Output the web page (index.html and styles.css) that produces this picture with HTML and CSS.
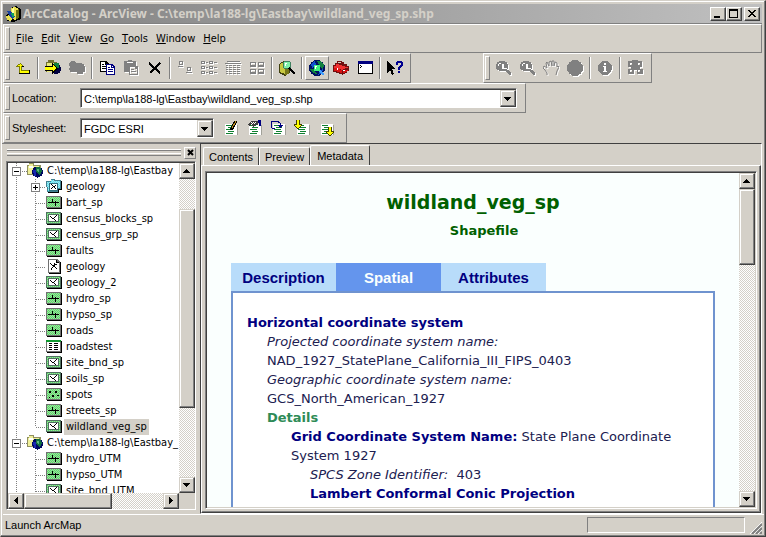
FILE: index.html
```html
<!DOCTYPE html>
<html lang="en">
<head>
<meta charset="utf-8">
<title>ArcCatalog - ArcView - C:\temp\la188-lg\Eastbay\wildland_veg_sp.shp</title>
<link rel="stylesheet" href="styles.css">
</head>
<body>
<svg class="sprites" aria-hidden="true">
  <defs>
    <pattern id="green" width="2" height="2" patternUnits="userSpaceOnUse"><path fill="#58e068" d="M0 0h2v2H0z"/><path fill="#a0d8a0" d="M0 0h1v1H0zM1 1h1v1H1z"/></pattern>
    <pattern id="cyan" width="2" height="2" patternUnits="userSpaceOnUse"><path fill="#50e8f8" d="M0 0h2v2H0z"/><path fill="#b0e0e8" d="M0 0h1v1H0zM1 1h1v1H1z"/></pattern>
  </defs>
  <symbol id="line" viewBox="0 0 16 16"><path fill="#000" d="M1 2h15v12H1z"/><path fill="#707070" d="M0 1h15v12H0z"/><path fill="url(#green)" d="M1 2h13v10H1z"/><path fill="#000" d="M2 7h11v1H2zM6 4h1v4H6zM9 6h1v5H9z"/></symbol>
  <symbol id="poly" viewBox="0 0 16 16"><path fill="#000" d="M1 2h15v12H1z"/><path fill="#507060" d="M0 1h15v12H0z"/><path fill="url(#green)" d="M1 2h13v10H1z"/><path fill="#507060" d="M2 3h11v8H2z"/><path fill="#fff" d="M3 4h9v6H3z"/><path fill="#000" d="M4 5h1v1H4zM5 6h1v1H5zM6 7h2v1H6zM8 6h1v1H8zM9 5h1v1H9zM10 4h1v1h-1zM8 8h1v1H8zM9 9h1v1H9z"/></symbol>
  <symbol id="points" viewBox="0 0 16 16"><path fill="#000" d="M1 2h15v12H1z"/><path fill="#707070" d="M0 1h15v12H0z"/><path fill="url(#green)" d="M1 2h13v10H1z"/><path fill="#000" d="M3 4h2v2H3zM9 4h2v2H9zM6 8h2v2H6zM11 8h2v1h-2zM3 10h1v1H3z"/></symbol>
  <symbol id="table" viewBox="0 0 16 16"><path fill="#000" d="M1 2h15v12H1z"/><path fill="#707070" d="M0 1h15v12H0z"/><path fill="#fff" d="M1 3h13v9H1z"/><path fill="#109830" d="M0 1h15v2H0z"/><path fill="#000" d="M3 4h3v1H3zM8 4h4v1H8zM3 6h3v1H3zM8 6h4v1H8zM3 8h3v1H3zM8 8h4v1H8zM3 10h3v1H3zM8 10h4v1H8z"/></symbol>
  <symbol id="coverage" viewBox="0 0 16 16"><path fill="#000" d="M3 1h9l3 3v11H3z"/><path fill="#707070" d="M2 0h9l3 3v11H2z"/><path fill="#fff" d="M3 1h7v3h3v9H3z"/><path fill="#000" d="M10 1h1v2h2v1h-3zM4 4h1v1H4zM5 5h1v1H5zM6 6h3v1H6zM9 5h2v1H9zM7 7h1v1H7zM6 8h1v1H6zM5 9h1v2H5zM8 7h1v1H8zM9 8h1v1H9zM10 9h1v1h-1zM8 4h1v2H8z"/></symbol>
  <symbol id="dataset" viewBox="0 0 16 16"><path fill="#000" d="M2 4h13V2h1v9h-3v3H2z"/><path fill="#408090" d="M0 2h5V0h4v1h6v9h-3v3H1z"/><path fill="url(#cyan)" d="M1 3h4V1h3v1h6v7h-2v3H2z"/><path fill="#307080" d="M3 4h9v8H3z"/><path fill="#fff" d="M4 5h7v6H4z"/><path fill="#000" d="M5 5h1v1H5zM6 6h1v1H6zM7 7h2v1H7zM9 6h1v1H9zM6 8h1v1H6zM5 9h1v1H5zM8 8h1v1H8zM9 9h1v1H9z"/></symbol>
  <symbol id="folder" viewBox="0 0 16 16"><path fill="#909060" d="M0 2h2V0h5v2h7v10H0z"/><path fill="#f0f098" d="M1 3h1V1h4v2h6v8H1z"/><path fill="#fff" d="M2 3h4v2H2z"/><circle cx="10.500" cy="9" r="5.500" fill="#000860"/><path fill="#1828b0" d="M6 7h3v6H7z"/><path fill="#107040" d="M9 4h4l2 4-2 4-2-1-2-3z"/><path fill="#60b880" d="M10 6h2v3h-1z"/></symbol>
  <symbol id="sheet" viewBox="0 0 16 16"><path fill="#a0a098" d="M4 15h12V5h-1v9H4z"/><path fill="#fff" d="M3 4h12v11H3z"/><path fill="#108030" d="M4 5h6v1H4zM6 7h6v1H6zM4 9h7v1H4zM6 11h6v1H6zM4 13h7v1H4z"/></symbol>
  <symbol id="glass" viewBox="0 0 16 16"><path d="M4 1h6v1h2v2h1v5h-1v1h2v1h1v1h1v3h-2v-1h-1v-1h-1v-1h-1v-1H4v-1H2V9H1V4h1V2h2z"/><path fill="#fff" d="M4 3h2v1H4zM3 4h1v2H3zM8 4h1v4h3v1H7V4z"/></symbol>
  <symbol id="up" viewBox="0 0 8 4"><path d="M3 0h1v1h1v1h1v1h1v1H0V3h1V2h1V1h1z"/></symbol>
  <symbol id="down" viewBox="0 0 8 4"><path d="M0 0h7v1H6v1H5v1H4v1H3V3H2V2H1V1H0z"/></symbol>
</svg>

<div class="window">
  <header class="titlebar">
    <svg class="icon" viewBox="0 0 16 16"><path fill="#000" d="M1 9l5-2V2l5-2 5 3v10l-7 3-7-1z"/><path fill="#e8e050" d="M6 2l4-1 4 2v9l-4 2-4-3zM1 10l3-1 4 3-2 3-4-1z"/><path fill="#ffffa0" d="M7 3l2-1v8L7 9z"/><path fill="#707010" d="M11 4l3-1v9l-3 1z"/><path fill="#1840a0" d="M2 5h3l3 2 2 4-3 2-3-4z"/><path fill="#10a060" d="M6 7h3v4H7z"/></svg>
    <h1>ArcCatalog - ArcView - C:\temp\la188-lg\Eastbay\wildland_veg_sp.shp</h1>
    <button class="caption" aria-label="Minimize"><svg viewBox="0 0 10 9"><path d="M1 7h6v2H1z"/></svg></button>
    <button class="caption" aria-label="Maximize"><svg viewBox="0 0 10 9"><path fill-rule="evenodd" d="M0 0h9v9H0zM1 2v6h7V2z"/></svg></button>
    <button class="caption close" aria-label="Close"><svg viewBox="0 0 10 9"><path d="M1 1h2v1h1v1h2V2h1V1h2v1H8v1H7v1H6v1h1v1h1v1h1v1H7V7H6V6H4v1H3v1H1V7h1V6h1V5h1V4H3V3H2V2H1z"/></svg></button>
  </header>

  <nav class="bar menubar" aria-label="Menu">
    <button><u>F</u>ile</button><button><u>E</u>dit</button><button><u>V</u>iew</button><button><u>G</u>o</button><button><u>T</u>ools</button><button><u>W</u>indow</button><button><u>H</u>elp</button>
  </nav>

  <div class="row">
    <div class="bar toolbar">
      <button aria-label="Up one level"><svg class="icon" viewBox="0 0 16 16"><path fill="#808000" d="M5 3h1v1h1v1h1v1h1v1H7v3h8v4H4V7H1V6h1V5h1V4h2z"/><path fill="#ffff00" d="M5 4h1v1h1v1H6v5h8v2H5V6H3V5h2z"/><path fill="#000" d="M4 13h11v1H4zM14 10h1v4h-1zM7 6h2v1H7z"/></svg></button>
      <i class="sep"></i>
      <button aria-label="Connect to folder"><svg class="icon" viewBox="0 0 16 16"><path fill="#707030" d="M1 2h2V0h6v2h3v10H1z"/><path fill="#e8e878" d="M2 3h9v9H2z"/><circle cx="11" cy="9" r="5" fill="#000040"/><path fill="#108040" d="M9 3h5v5l-3 2z"/><path fill="#000" d="M0 6h7V3l6 5-6 6v-3H0z"/><path fill="#ffff00" d="M0 7h8V5l3 3-3 3v-1H0z"/></svg></button>
      <button disabled aria-label="Disconnect folder"><svg class="icon" viewBox="0 0 16 16"><path d="M0 3h1V2h1V1h4v1h1v1h6v1h2v2h1v6h-2v2H8v-2H1v-2H0V8h1V6H0z"/></svg></button>
      <i class="sep"></i>
      <button aria-label="Copy"><svg class="icon" viewBox="0 0 16 16"><path fill="#000" d="M1 1h6l3 3v8H1z"/><path fill="#fff" d="M2 2h4v3h3v6H2z"/><path fill="#000" d="M3 4h2v1H3zM3 6h4v1H3zM3 8h4v1H3z"/><path fill="#000080" d="M7 4h6l3 3v8H7z"/><path fill="#fff" d="M8 5h4v3h3v6H8zM13 6l1 1h-1z"/><path fill="#000080" d="M9 7h2v1H9zM9 9h5v1H9zM9 11h5v1H9z"/></svg></button>
      <button disabled aria-label="Paste"><svg class="icon" viewBox="0 0 16 16"><path fill-rule="evenodd" d="M1 1h4V0h4v1h4v5h2v9H6v-3H1zM4 2v1h6V2zM7 7v7h7V9h-2V7zM8 9h3v1H8zM8 11h5v1H8z"/></svg></button>
      <button aria-label="Delete"><svg class="icon" viewBox="0 0 16 16"><path fill="none" stroke="#000" stroke-width="2" d="M2 3l11 10M13 3L3 13"/></svg></button>
      <i class="sep"></i>
      <button disabled aria-label="Large icons"><svg class="icon" viewBox="0 0 16 16"><path fill-rule="evenodd" d="M2 1h4v4H2zM3 2v2h2V2zM1 6h5v1H1zM10 7h4v4h-4zM11 8v2h2V8zM9 12h6v1H9z"/></svg></button>
      <button disabled aria-label="List"><svg class="icon" viewBox="0 0 16 16"><path fill-rule="evenodd" d="M0 1h4v3H0zM1 2v1h2V2zM5 2h2v1H5zM8 1h4v3H8zM9 2v1h2V2zM13 2h3v1h-3zM0 6h4v3H0zM1 7v1h2V7zM5 7h2v1H5zM8 6h4v3H8zM9 7v1h2V7zM13 7h3v1h-3zM0 11h4v3H0zM1 12v1h2v-1zM5 12h2v1H5zM8 11h4v3H8zM9 12v1h2v-1zM13 12h3v1h-3z"/></svg></button>
      <button disabled aria-label="Details"><svg class="icon" viewBox="0 0 16 16"><path d="M2 1h13v1H2zM0 3h16v1H0zM1 5h2v1H1zM4 5h3v1H4zM8 5h3v1H8zM12 5h3v1h-3zM1 7h2v1H1zM4 7h3v1H4zM8 7h3v1H8zM12 7h3v1h-3zM1 9h2v1H1zM4 9h3v1H4zM8 9h3v1H8zM12 9h3v1h-3zM1 11h2v1H1zM4 11h3v1H4zM8 11h3v1H8zM12 11h3v1h-3zM1 13h2v1H1zM4 13h3v1H4zM8 13h3v1H8zM12 13h3v1h-3z"/></svg></button>
      <button disabled aria-label="Thumbnails"><svg class="icon" viewBox="0 0 16 16"><path fill-rule="evenodd" d="M1 2h6v5H1zM2 3v2h4V3zM9 2h6v5H9zM10 3v2h4V3zM1 9h6v5H1zM2 10v2h4v-2zM9 9h6v5H9zM10 10v2h4v-2z"/></svg></button>
      <i class="sep"></i>
      <button aria-label="Search"><svg class="icon" viewBox="0 0 16 16"><path fill="#404010" d="M0 4l5-3 6 1v11l-5 3-6-3z"/><path fill="#c8c840" d="M1 4l5-2 4 2v8l-4 2-5-2z"/><path fill="#787818" d="M6 7h4v7l-4 1z"/><circle cx="8" cy="5" r="4.500" fill="#408060"/><circle cx="8" cy="5" r="3.500" fill="#80f0a8"/><path fill="#fff" d="M6 3h2v1H7v2H6z"/><path fill="none" stroke="#000" stroke-width="2" d="M10 8l6 6"/></svg></button>
      <i class="sep"></i>
      <button class="raised" aria-label="Launch ArcMap"><svg class="icon" viewBox="0 0 16 16"><circle cx="8" cy="8" r="8" fill="#001060"/><path fill="#1050d0" d="M2 4l4-3 1 3-4 4zM11 11l3-2-1 4-4 2z"/><path fill="#108040" d="M8 1h4l3 4-1 4-3-2zM1 9h4l3 5-4-1z"/><circle cx="8" cy="8" r="3.500" fill="#40f080"/><path fill="#fff" d="M6 6h2v1H7v2H6z"/><path fill="none" stroke="#40a0ff" stroke-width="2" d="M11 11l4 4"/></svg></button>
      <button aria-label="ArcToolbox"><svg class="icon" viewBox="0 0 16 16"><path fill="#701010" d="M0 5h2V3h2V1h5v1h2v2h3v2h2v5h-2v2h-2v1h-2v1H9v-1H6v-1H3v-1H0z"/><path fill="#f03030" d="M1 6h2V4h3v1h3v1h3v1h3v1h-3v1h-2v1H8V9H5V8H1z"/><path fill="#d81010" d="M1 8h3v1h3v1h2v3H7v-1H4v-1H1zM10 11h2v-1h3v1h-1v1h-2v1h-2z"/><path fill="#fff" d="M4 8h1v2H4zM10 10h2v1h-2z"/><path fill="#d4d0c8" d="M5 2h3v1H5z"/></svg></button>
      <button aria-label="Command line"><svg class="icon" viewBox="0 0 16 16"><path fill="#000" d="M1 2h15v12H1z"/><path fill="#000080" d="M1 1h15v3H1z"/><path fill="#fff" d="M2 4h13v9H2z"/><path fill="#000" d="M3 5h1v1H3zM4 6h1v1H4zM3 7h1v1H3z"/></svg></button>
      <i class="sep"></i>
      <button aria-label="What's this?"><svg class="icon wide" viewBox="0 0 18 16"><path fill="#000" d="M1 1l8 8H6l2 5-2 1-2-5-3 3z"/><path fill="#000090" d="M10 2h1V1h5v1h1v4h-1v1h-1v1h-1v2h-2V7h1V6h1V5h1V3h-3v2h-2zM12 11h2v2h-2z"/></svg></button>
    </div>
    <div class="bar toolbar geography">
      <button disabled aria-label="Zoom in"><svg class="icon"><use href="#glass"/></svg></button>
      <button disabled aria-label="Zoom out"><svg class="icon"><use href="#glass"/></svg></button>
      <button disabled aria-label="Pan"><svg class="icon smooth" viewBox="0 0 16 16"><path fill="none" stroke="#808080" d="M4 15v-2l-2-3-2-2 1-2 3 2-1-5 1-1 2 4V2l2-1 1 5V1h2v5l1-4 2 1v4l1-1 1 1-2 4-1 4"/></svg></button>
      <button disabled aria-label="Full extent"><svg class="icon" viewBox="0 0 16 16"><circle cx="8" cy="8" r="8"/></svg></button>
      <i class="sep"></i>
      <button disabled aria-label="Identify"><svg class="icon" viewBox="0 0 16 16"><circle cx="8" cy="8" r="7"/><path fill="#fff" d="M7 3h2v2H7zM6 6h3v5h1v1H6v-1h1V7H6z"/></svg></button>
      <i class="sep"></i>
      <button disabled aria-label="Create thumbnail"><svg class="icon" viewBox="0 0 16 16"><path fill-rule="evenodd" d="M1 1h4V0h6v1h4v6h-2v2h3v5h-6v-4H7v4H1V9h3V7H1zM3 3v2h2V3zM11 3v2h2V3zM3 10v2h2v-2zM11 10v2h2v-2z"/></svg></button>
    </div>
  </div>

  <div class="row">
    <div class="bar location">
      <label for="location">Location:</label>
      <span class="combo"><input id="location" type="text" value="C:\temp\la188-lg\Eastbay\wildland_veg_sp.shp"><button aria-label="Show locations"><svg class="arrow"><use href="#down"/></svg></button></span>
    </div>
  </div>

  <div class="row">
    <div class="bar stylesheet">
      <label for="stylesheet">Stylesheet:</label>
      <span class="combo"><select id="stylesheet"><option>FGDC ESRI</option></select><span class="drop"><svg class="arrow"><use href="#down"/></svg></span></span>
      <button aria-label="Edit metadata"><svg class="icon" viewBox="0 0 16 16"><use href="#sheet"/><path fill="none" stroke="#000" stroke-width="3" d="M9 10l5-9"/><path fill="none" stroke="#c09020" d="M10 8l4-7"/></svg></button>
      <button aria-label="Metadata properties"><svg class="icon" viewBox="0 0 16 16"><use href="#sheet"/><path fill="#404040" d="M2 4l3-3h7v4H9L7 7 6 4 3 6z"/><path fill="#fff" d="M5 2h1v1H5zM7 2h1v1H7zM9 2h1v1H9zM6 3h1v1H6zM8 3h1v1H8z"/><path fill="#000080" d="M12 0h3v6h-2V3h-1z"/></svg></button>
      <button aria-label="Create metadata"><svg class="icon" viewBox="0 0 16 16"><use href="#sheet"/><path fill="#000080" d="M1 1h8v1h1v1h1v2h2v1h-1v1h-1v1h-1V7H9V6H8V5h2V3H8V2H2v6h3v1H2V8H1z"/></svg></button>
      <button aria-label="Import metadata"><svg class="icon" viewBox="0 0 16 16"><use href="#sheet"/><path fill="#404000" d="M2 0h4v4h2v2H7v1H6v1H5v1H3V8H2V7H1V6H0V4h2z"/><path fill="#ffff00" d="M3 0h2v5h2v1H6v1H5v1H3V7H2V6H1V5h2z"/></svg></button>
      <button aria-label="Export metadata"><svg class="icon" viewBox="0 0 16 16"><use href="#sheet"/><path fill="#404000" d="M10 7h4v4h2v2h-1v1h-1v1h-1v1h-2v-1h-1v-1H9v-1H8v-2h2z"/><path fill="#ffff00" d="M11 7h2v5h2v1h-1v1h-1v1h-2v-1h-1v-1H9v-1h2z"/></svg></button>
    </div>
  </div>

  <main class="main">
    <aside class="catalog">
      <div class="dock"><span class="grip"></span><button aria-label="Close catalog tree"><svg viewBox="0 0 7 7"><path fill="none" stroke="#000" stroke-width="2" d="M1 1l5 5M6 1L1 6"/></svg></button></div>
      <div class="treebox">
        <ul class="tree">
          <li>
            <div class="node root"><span class="stem"><button aria-label="Collapse"><svg viewBox="0 0 7 7"><path d="M1 3h5v1H1z"/></svg></button></span><svg class="icon"><use href="#folder"/></svg><span class="name">C:\temp\la188-lg\Eastbay</span></div>
            <ul>
              <li class="node"><span class="stem"><button aria-label="Expand"><svg viewBox="0 0 7 7"><path d="M1 3h5v1H1zM3 1h1v5H3z"/></svg></button></span><svg class="icon"><use href="#dataset"/></svg><span class="name">geology</span></li>
              <li class="node"><span class="stem"></span><svg class="icon"><use href="#line"/></svg><span class="name">bart_sp</span></li>
              <li class="node"><span class="stem"></span><svg class="icon"><use href="#poly"/></svg><span class="name">census_blocks_sp</span></li>
              <li class="node"><span class="stem"></span><svg class="icon"><use href="#poly"/></svg><span class="name">census_grp_sp</span></li>
              <li class="node"><span class="stem"></span><svg class="icon"><use href="#line"/></svg><span class="name">faults</span></li>
              <li class="node"><span class="stem"></span><svg class="icon"><use href="#coverage"/></svg><span class="name">geology</span></li>
              <li class="node"><span class="stem"></span><svg class="icon"><use href="#poly"/></svg><span class="name">geology_2</span></li>
              <li class="node"><span class="stem"></span><svg class="icon"><use href="#line"/></svg><span class="name">hydro_sp</span></li>
              <li class="node"><span class="stem"></span><svg class="icon"><use href="#line"/></svg><span class="name">hypso_sp</span></li>
              <li class="node"><span class="stem"></span><svg class="icon"><use href="#line"/></svg><span class="name">roads</span></li>
              <li class="node"><span class="stem"></span><svg class="icon"><use href="#table"/></svg><span class="name">roadstest</span></li>
              <li class="node"><span class="stem"></span><svg class="icon"><use href="#poly"/></svg><span class="name">site_bnd_sp</span></li>
              <li class="node"><span class="stem"></span><svg class="icon"><use href="#poly"/></svg><span class="name">soils_sp</span></li>
              <li class="node"><span class="stem"></span><svg class="icon"><use href="#points"/></svg><span class="name">spots</span></li>
              <li class="node"><span class="stem"></span><svg class="icon"><use href="#line"/></svg><span class="name">streets_sp</span></li>
              <li class="node last"><span class="stem"></span><svg class="icon"><use href="#poly"/></svg><span class="name selected">wildland_veg_sp</span></li>
            </ul>
          </li>
          <li>
            <div class="node root"><span class="stem"><button aria-label="Collapse"><svg viewBox="0 0 7 7"><path d="M1 3h5v1H1z"/></svg></button></span><svg class="icon"><use href="#folder"/></svg><span class="name">C:\temp\la188-lg\Eastbay_</span></div>
            <ul>
              <li class="node"><span class="stem"></span><svg class="icon"><use href="#line"/></svg><span class="name">hydro_UTM</span></li>
              <li class="node"><span class="stem"></span><svg class="icon"><use href="#line"/></svg><span class="name">hypso_UTM</span></li>
              <li class="node"><span class="stem"></span><svg class="icon"><use href="#poly"/></svg><span class="name">site_bnd_UTM</span></li>
            </ul>
          </li>
        </ul>
        <div class="scroll vertical tree-v"><button aria-label="Scroll up"><svg class="arrow"><use href="#up"/></svg></button><div class="track"><div class="thumb"></div></div><button aria-label="Scroll down"><svg class="arrow"><use href="#down"/></svg></button></div>
        <div class="scroll horizontal"><button aria-label="Scroll left"><svg class="arrow side" viewBox="0 0 4 8"><path d="M4 0v7H3V6H2V5H1V4H0V3h1V2h1V1h1V0z"/></svg></button><div class="track"><div class="thumb"></div></div><button aria-label="Scroll right"><svg class="arrow side" viewBox="0 0 4 8"><path d="M0 0v7h1V6h1V5h1V4h1V3H3V2H2V1H1V0z"/></svg></button></div>
      </div>
    </aside>

    <section class="view">
      <div class="tabs" role="tablist">
        <button role="tab">Contents</button><button role="tab">Preview</button><button role="tab" class="active" aria-selected="true">Metadata</button>
      </div>
      <div class="page">
        <div class="viewer">
          <article class="doc">
            <h2>wildland_veg_sp</h2>
            <h3>Shapefile</h3>
            <div class="doc-tabs"><button>Description</button><button class="current">Spatial</button><button>Attributes</button></div>
            <div class="sheet">
              <h4>Horizontal coordinate system</h4>
              <div class="level1">
                <p><em>Projected coordinate system name:</em></p>
                <p>NAD_1927_StatePlane_California_III_FIPS_0403</p>
                <p><em>Geographic coordinate system name:</em></p>
                <p>GCS_North_American_1927</p>
                <h5>Details</h5>
                <div class="level2">
                  <p><b>Grid Coordinate System Name:</b> State Plane Coordinate System 1927</p>
                  <div class="level3">
                    <p><em>SPCS Zone Identifier:</em>&nbsp; 403</p>
                    <p><b>Lambert Conformal Conic Projection</b></p>
                  </div>
                </div>
              </div>
            </div>
          </article>
          <div class="scroll vertical doc-v"><button aria-label="Scroll up"><svg class="arrow"><use href="#up"/></svg></button><div class="track"><div class="thumb"></div></div><button aria-label="Scroll down"><svg class="arrow"><use href="#down"/></svg></button></div>
        </div>
      </div>
    </section>
  </main>

  <footer class="status"><span class="message">Launch ArcMap</span><span class="progress"></span><svg class="resize" viewBox="0 0 12 12"><path fill="none" stroke="#fff" d="M0 12L12 0M4 12l8-8M8 12l4-4"/><path fill="none" stroke="#808080" stroke-width="2" d="M2 12L12 2M6 12l6-6M10 12l2-2"/></svg></footer>
</div>
</body>
</html>
```
FILE: styles.css
```css
:root {
  --face: #d4d0c8;
  --shade: #808080;
  --dark: #404040;
  --ui: "DejaVu Sans Condensed", "DejaVu Sans", sans-serif;
  --small: "Liberation Sans", sans-serif;
}

* { box-sizing: border-box; }

body {
  margin: 0;
  font: 11px/16px var(--ui);
  color: #000;
  background: var(--face);
}

h1, h2, h3, h4, h5, p, ul { margin: 0; padding: 0; }
ul { list-style: none; }
svg { display: block; flex: none; shape-rendering: crispEdges; }
.sprites { position: absolute; width: 0; height: 0; }
.icon { width: 16px; height: 16px; }
.icon.wide { width: 18px; }
.smooth { shape-rendering: auto; }
.arrow { width: 8px; height: 4px; }
.arrow.side { width: 4px; height: 8px; }

button {
  display: flex;
  align-items: center;
  justify-content: center;
  margin: 0;
  padding: 0;
  border: 0;
  background: var(--face);
  color: #000;
  font: inherit;
}

.window {
  display: flex;
  flex-direction: column;
  height: 100vh;
  padding: 2px 1px 0 1px;
  border: 1px solid;
  border-color: var(--face) var(--dark) var(--dark) var(--face);
  box-shadow: inset -1px -1px var(--shade), inset 1px 1px #fff;
}

.titlebar {
  display: flex;
  align-items: center;
  height: 20px;
  margin: 1px 2px 0 1px;
  padding: 0 2px;
  background: linear-gradient(to right, #808080, #c0c0c0);
  border-bottom: 1px solid var(--shade);
}
.titlebar h1 {
  flex: 1;
  padding-left: 2px;
  color: var(--face);
  font: bold 12px/16px "Noto Sans", sans-serif;
  white-space: nowrap;
}
.caption {
  width: 16px;
  height: 14px;
  border: 1px solid;
  border-color: #fff var(--dark) var(--dark) #fff;
  box-shadow: inset -1px -1px var(--shade);
}
.caption svg { width: 10px; height: 9px; }
.close { margin-left: 2px; }

.bar {
  display: flex;
  align-items: center;
  border: 1px solid;
  border-color: #fff var(--shade) var(--shade) #fff;
}
.bar::before {
  content: "";
  align-self: stretch;
  width: 3px;
  margin: 2px 0 2px 1px;
  border: 1px solid;
  border-color: #fff var(--shade) var(--shade) #fff;
}
.menubar {
  height: 29px;
  margin: 0 2px 0 1px;
}
.menubar::before { margin-right: 6px; }
.menubar button { margin-right: 8px; }
.row { display: flex; height: 30px; margin: 0 2px 0 1px; }
.row .bar { height: 30px; }

.toolbar { padding-right: 3px; }
.toolbar::before { margin-right: 1px; }
.geography { margin-left: 72px; padding-right: 4px; }
.bar.toolbar button, .stylesheet > button { width: 24px; height: 24px; }
.bar button:disabled svg { fill: var(--shade); filter: drop-shadow(1px 1px 0 #fff); }
.raised {
  border: 1px solid;
  border-color: #fff var(--shade) var(--shade) #fff;
}
.sep {
  width: 2px;
  height: 22px;
  margin: 0 2px;
  border-left: 1px solid var(--shade);
  border-right: 1px solid #fff;
}

.location, .stylesheet { font-family: var(--small); }
.location label, .stylesheet label { width: 70px; padding-left: 2px; }
.location { width: 523px; padding-right: 8px; }
.stylesheet { width: 344px; }
.combo {
  display: flex;
  flex: 1;
  height: 20px;
  border: 1px solid;
  border-color: var(--shade) #fff #fff var(--shade);
  box-shadow: inset 1px 1px var(--dark);
  padding: 1px 0 0 1px;
  background: #fff;
}
.combo input, .combo select {
  flex: 1;
  min-width: 0;
  padding: 0 2px;
  border: 0;
  background: transparent;
  color: #000;
  font: 11px/16px var(--small);
  appearance: none;
}
.stylesheet .combo { position: relative; flex: none; width: 134px; margin-right: 4px; }
.combo button, .drop, .scroll button, .thumb {
  border: 1px solid;
  border-color: var(--face) var(--dark) var(--dark) var(--face);
  box-shadow: inset -1px -1px var(--shade), inset 1px 1px #fff;
  background: var(--face);
}
.combo button, .drop { width: 16px; }
.drop {
  position: absolute;
  inset: 1px 0 0 auto;
  display: flex;
  align-items: center;
  justify-content: center;
  pointer-events: none;
}

.main {
  display: grid;
  flex: 1;
  grid-template-columns: 198px 1fr;
  min-height: 0;
  margin-right: 2px;
}
.catalog {
  display: flex;
  flex-direction: column;
  min-height: 0;
  padding: 0 4px 4px 4px;
  border-top: 1px solid var(--shade);
}
.dock { display: flex; align-items: center; gap: 3px; height: 17px; }
.grip {
  flex: 1;
  height: 7px;
  margin-left: 1px;
  border-top: 1px solid #fff;
  border-bottom: 1px solid var(--shade);
  background: linear-gradient(var(--shade) 0 1px, var(--face) 1px 3px, #fff 3px 4px, var(--face) 4px);
}
.dock button {
  width: 12px;
  height: 12px;
  border: 1px solid;
  border-color: #fff var(--shade) var(--shade) #fff;
}
.dock svg { width: 7px; height: 7px; shape-rendering: auto; }
.treebox {
  display: grid;
  flex: 1;
  grid-template: 1fr 16px / 1fr 16px;
  min-height: 0;
  border: 1px solid;
  border-color: var(--shade) #fff #fff var(--shade);
  box-shadow: inset 1px 1px var(--dark);
  padding: 1px 0 0 1px;
}
.tree { min-height: 0; overflow: hidden; background: #fff; }
.node { display: flex; align-items: center; height: 16px; white-space: nowrap; }
.stem {
  display: flex;
  align-items: center;
  flex: none;
  width: 38px;
  height: 16px;
  padding-left: 23px;
  background:
    repeating-linear-gradient(#808080 0 1px, #fff 1px 2px) 8px 0 / 1px 100% no-repeat,
    repeating-linear-gradient(#808080 0 1px, #fff 1px 2px) 27px 0 / 1px 100% no-repeat,
    repeating-linear-gradient(to right, #808080 0 1px, #fff 1px 2px) 28px 8px / 10px 1px no-repeat;
}
.last .stem { background-size: 1px 100%, 1px 8px, 10px 1px; }
.root .stem {
  width: 19px;
  padding-left: 4px;
  background:
    repeating-linear-gradient(#808080 0 1px, #fff 1px 2px) 8px 0 / 1px 100% no-repeat,
    repeating-linear-gradient(to right, #808080 0 1px, #fff 1px 2px) 8px 8px / 11px 1px no-repeat;
}
.stem button { width: 9px; height: 9px; border: 1px solid var(--shade); background: #fff; }
.stem svg { width: 7px; height: 7px; }
.name { margin-left: 2px; padding: 0 2px; }
.selected { background: var(--face); }

.scroll { display: flex; min-height: 0; }
.vertical { flex-direction: column; width: 16px; }
.horizontal { height: 16px; }
.scroll button { flex: none; width: 16px; height: 16px; }
.track {
  flex: 1;
  min-height: 0;
  background: repeating-conic-gradient(#fff 0 25%, var(--face) 0 50%) 0 0 / 2px 2px;
}
.tree-v .track { display: grid; grid-template-rows: 10fr 67fr 23fr; }
.tree-v .thumb { grid-row: 2; }
.doc-v .track { display: grid; grid-template-rows: 1fr 3fr; }
.horizontal .thumb { width: 63%; height: 16px; }

.view {
  display: flex;
  flex-direction: column;
  min-width: 0;
  min-height: 0;
  border: 1px solid;
  border-color: var(--dark) #fff #fff var(--dark);
}
.tabs { display: flex; align-items: flex-end; height: 21px; padding-left: 2px; }
.tabs button {
  height: 18px;
  padding: 0 5px;
  border: 1px solid #fff;
  border-right-color: var(--dark);
  border-bottom: 0;
  border-radius: 2px 2px 0 0;
  font: 11px/16px var(--small);
}
.tabs .active { height: 20px; padding: 0 6px; }
.page {
  display: flex;
  flex: 1;
  min-height: 0;
  padding: 5px 3px 3px 3px;
  border: 1px solid;
  border-color: #fff var(--dark) var(--dark) #fff;
  box-shadow: inset -1px -1px var(--shade);
}
.viewer {
  display: flex;
  flex: 1;
  min-width: 0;
  border: 1px solid;
  border-color: var(--shade) #fff #fff var(--shade);
  box-shadow: inset 1px 1px var(--dark);
  padding: 1px;
}
.doc {
  flex: 1;
  min-width: 0;
  overflow: hidden;
  padding: 16px 24px 0;
  background: #fafffe;
  color: #202050;
  font: 13px/19px "DejaVu Sans", sans-serif;
}
.doc h2 { color: #006000; font-size: 19px; line-height: 26px; text-align: center; }
.doc h3 { margin: 6px 0 23px; padding-left: 22px; color: #006000; font-size: 13px; text-align: center; }
.doc-tabs { display: flex; }
.doc-tabs button {
  width: 105px;
  height: 28px;
  background: #b8dcfa;
  color: #000080;
  font: bold 15px/19px "Liberation Sans", sans-serif;
}
.doc-tabs .current { background: #6495ed; color: #fafffe; }
.sheet {
  height: 400px;
  padding: 20px 14px;
  border: 2px solid #6f93cf;
  background: #fff;
}
.doc h4, .doc b { color: #000080; font-size: 13px; font-weight: bold; }
.doc h5 { color: #2e8b57; font-size: 13px; }
.level1 { padding-left: 20px; }
.level2 { padding-left: 24px; }
.level3 { padding-left: 19px; }

.status {
  display: flex;
  align-items: center;
  height: 21px;
  margin: 0 0 1px 1px;
  padding-left: 2px;
  border-top: 1px solid #fff;
  font-family: var(--small);
}
.message { flex: 1; }
.progress {
  width: 158px;
  height: 16px;
  border: 1px solid;
  border-color: var(--shade) #fff #fff var(--shade);
}
.resize { width: 12px; height: 12px; margin: 0 2px 1px 5px; align-self: flex-end; shape-rendering: auto; }
```
